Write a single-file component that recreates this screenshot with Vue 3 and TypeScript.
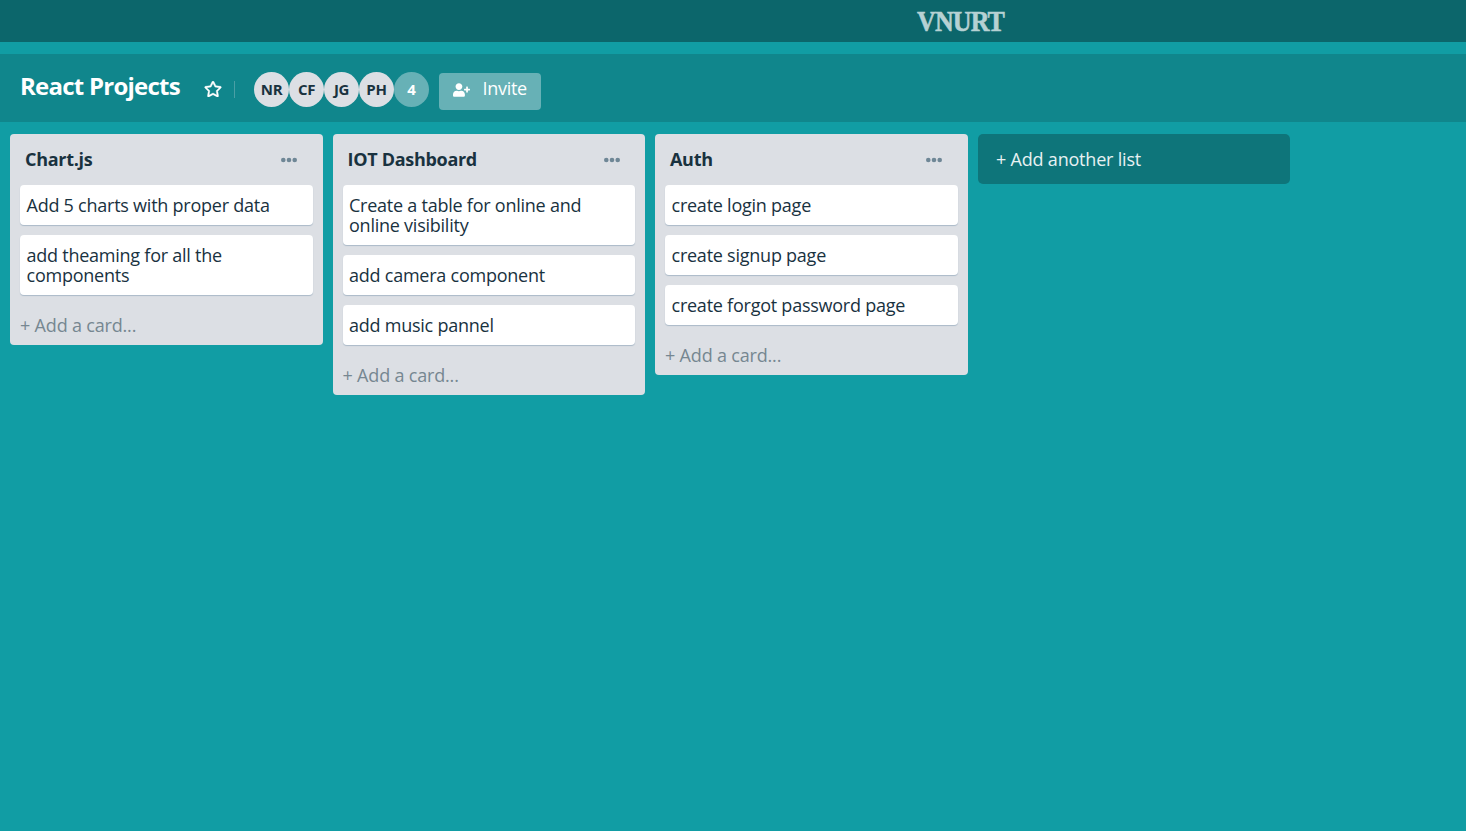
<script setup lang="ts">
interface List {
  title: string
  cards: string[]
}

const members: string[] = ['NR', 'CF', 'JG', 'PH']
const extraMembers = 4

const lists: List[] = [
  {
    title: 'Chart.js',
    cards: ['Add 5 charts with proper data', 'add theaming for all the components'],
  },
  {
    title: 'IOT Dashboard',
    cards: ['Create a table for online and online visibility', 'add camera component', 'add music pannel'],
  },
  {
    title: 'Auth',
    cards: ['create login page', 'create signup page', 'create forgot password page'],
  },
]
</script>

<template>
  <div class="page">
    <header class="masthead">
      <span class="logo">VNURT</span>
    </header>

    <section class="board-bar">
      <h1 class="board-title">React Projects</h1>
      <button class="star" aria-label="Star board">
        <svg viewBox="0 0 576 512" width="18" height="16">
          <path
            fill="currentColor"
            stroke="currentColor"
            stroke-width="12"
            d="M528.1 171.5L382 150.2 316.7 17.8c-11.7-23.6-45.6-23.9-57.4 0L194 150.2 47.9 171.5c-26.2 3.8-36.7 36.1-17.7 54.6l105.7 103-25 145.5c-4.5 26.3 23.2 46 46.4 33.7L288 439.6l130.7 68.7c23.2 12.2 50.9-7.4 46.4-33.7l-25-145.5 105.7-103c19-18.5 8.5-50.8-17.7-54.6zM388.6 312.3l23.7 138.4L288 385.4l-124.3 65.3 23.7-138.4-100.6-98 139-20.2 62.2-126 62.2 126 139 20.2-100.6 98z"
          />
        </svg>
      </button>
      <span class="divider"></span>
      <div class="members">
        <span v-for="m in members" :key="m" class="avatar">{{ m }}</span>
        <span class="avatar more">{{ extraMembers }}</span>
      </div>
      <button class="invite">
        <svg viewBox="0 0 640 512" width="17" height="14">
          <path
            fill="currentColor"
            d="M624 208h-64v-64c0-8.800-7.200-16-16-16h-32c-8.800 0-16 7.200-16 16v64h-64c-8.800 0-16 7.200-16 16v32c0 8.800 7.200 16 16 16h64v64c0 8.800 7.200 16 16 16h32c8.800 0 16-7.200 16-16v-64h64c8.800 0 16-7.200 16-16v-32c0-8.800-7.200-16-16-16zm-400 48c70.700 0 128-57.300 128-128S294.700 0 224 0 96 57.300 96 128s57.300 128 128 128zm89.600 32h-16.700c-22.200 10.200-46.900 16-72.900 16s-50.600-5.800-72.900-16h-16.700C60.200 288 0 348.200 0 422.400V464c0 26.500 21.500 48 48 48h352c26.500 0 48-21.500 48-48v-41.600c0-74.200-60.200-134.400-134.400-134.400z"
          />
        </svg>
        <span>Invite</span>
      </button>
    </section>

    <main class="lists">
      <article v-for="list in lists" :key="list.title" class="list">
        <div class="list-head">
          <h2 class="list-title">{{ list.title }}</h2>
          <svg class="dots" viewBox="0 0 16 6" width="16" height="6">
            <circle cx="2.300" cy="3" r="2.300" />
            <circle cx="8" cy="3" r="2.300" />
            <circle cx="13.700" cy="3" r="2.300" />
          </svg>
        </div>
        <ul class="cards">
          <li v-for="card in list.cards" :key="card" class="card">{{ card }}</li>
        </ul>
        <div class="add-card">+ Add a card...</div>
      </article>
      <button class="add-list">+ Add another list</button>
    </main>
  </div>
</template>

<style>
body {
  background: #119da4;
}
</style>

<style scoped>
* {
  box-sizing: border-box;
}

.page {
  height: 831px;
  overflow: hidden;
  background: #119da4;
  font-family: 'Open Sans', 'Noto Sans', sans-serif;
  font-size: 18px;
  letter-spacing: -0.240px;
  color: #19323f;
}

button {
  border: 0;
  padding: 0;
  background: none;
  font: inherit;
  letter-spacing: inherit;
  color: #fff;
}

.masthead {
  display: flex;
  align-items: center;
  height: 42px;
  padding-left: 917px;
  background: #0c666b;
}

.logo {
  font-family: 'Liberation Serif', serif;
  font-size: 30px;
  font-weight: 700;
  line-height: 42px;
  letter-spacing: -1px;
  color: #b6d1d3;
  -webkit-text-stroke: 0.600px #b6d1d3;
  transform: scaleX(0.865);
  transform-origin: left;
}

.board-bar {
  display: flex;
  align-items: center;
  height: 68px;
  margin-top: 12px;
  padding: 2px 20px 0;
  background: #10868c;
}

.board-title {
  width: 184px;
  margin: -6px 0 0;
  font-size: 24px;
  font-weight: 700;
  line-height: 32px;
  letter-spacing: -0.760px;
  white-space: nowrap;
  color: #fff;
}

.star {
  display: flex;
  width: 18px;
  margin: 0 0 0 -0.500px;
}

.divider {
  width: 1px;
  height: 17px;
  margin: 1px 19px 0 12.500px;
  background: #4a9fa5;
}

.members {
  display: flex;
}

.avatar {
  width: 35px;
  height: 35px;
  border-radius: 50%;
  background: #dcdfe4;
  font-size: 15px;
  font-weight: 700;
  line-height: 35px;
  letter-spacing: -0.300px;
  text-align: center;
}

.more {
  background: #67b1b6;
  color: #fff;
}

.invite {
  display: flex;
  align-items: center;
  width: 102px;
  height: 37px;
  margin: 4px 0 0 10px;
  padding-left: 14px;
  border-radius: 4px;
  background: #67b1b6;
}

.invite svg {
  margin-top: -2px;
}

.invite span {
  margin: -6px 0 0 12.500px;
  letter-spacing: -0.300px;
}

.lists {
  display: flex;
  align-items: flex-start;
  gap: 10px;
  padding: 12px 10px;
}

.list {
  flex: none;
  width: 312.5px;
  padding: 0 10px 10px;
  border-radius: 4px;
  background: #dcdfe4;
}

.list-head {
  display: flex;
  align-items: center;
  justify-content: space-between;
  height: 51px;
  padding: 0 15.500px 0 5px;
}

.list-title {
  margin: -2px 0 0;
  font-size: 18px;
  font-weight: 700;
  line-height: 20px;
  letter-spacing: -0.300px;
}

.dots {
  fill: #6f8796;
}

.cards {
  display: grid;
  gap: 10px;
  margin: 0;
  padding: 0;
  list-style: none;
}

.card {
  padding: 10px 6.500px;
  border-radius: 4px;
  background: #fff;
  box-shadow: 0 1px 1px #aabac8;
  line-height: 20px;
}

.add-card {
  margin-top: 20px;
  line-height: 20px;
  letter-spacing: -0.180px;
  color: #768791;
}

.add-list {
  width: 312.5px;
  height: 50px;
  padding-left: 18.500px;
  border-radius: 5px;
  background: #0e757a;
  text-align: left;
  letter-spacing: -0.200px;
  color: #e7f1f2;
}
</style>
